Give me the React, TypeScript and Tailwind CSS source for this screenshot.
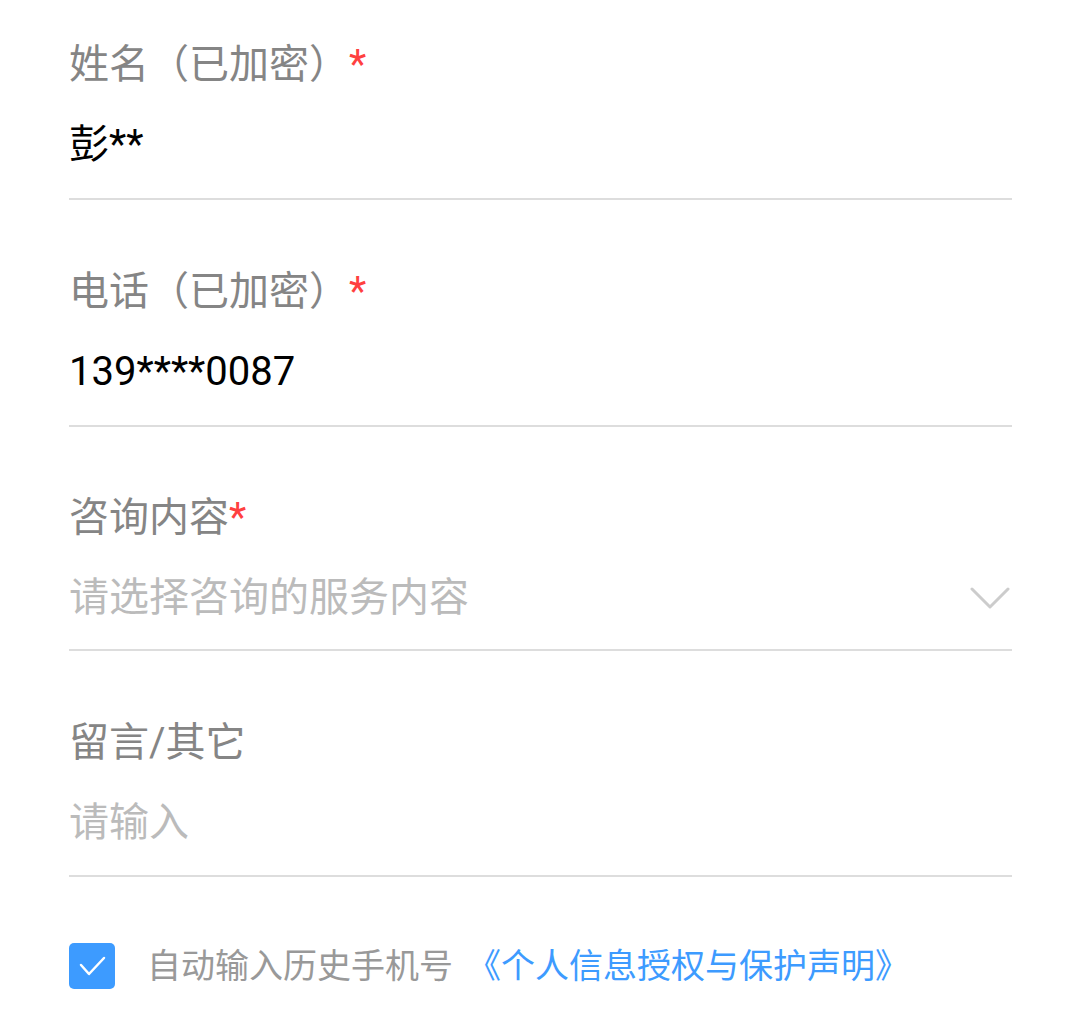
const FONT = "font-['Roboto','Noto_Sans_CJK_SC',sans-serif]";

function Field({
  label,
  required,
  value,
  placeholder,
  select,
  top,
  bottom,
}: {
  label: string;
  required?: boolean;
  value?: string;
  placeholder?: string;
  select?: boolean;
  top: string;
  bottom: string;
}) {
  return (
    <div className={`border-b-2 border-[#dddddd] ${top} ${bottom}`}>
      <div className="text-[40px] leading-[56px] text-[#858585]">
        {label}
        {required && <span className="text-[#ff4040]">*</span>}
      </div>
      <div className="mt-6 flex h-[56px] items-center justify-between text-[40px] leading-[56px]">
        {value ? (
          <span className="text-black">{value}</span>
        ) : (
          <span className="text-[#bbbbbb]">{placeholder}</span>
        )}
        {select && (
          <svg width="40" height="24" viewBox="0 0 40 24" className="mr-[2px]">
            <path
              d="M2 3 L20 21 L38 3"
              fill="none"
              stroke="#cccccc"
              strokeWidth="3"
              strokeLinecap="round"
              strokeLinejoin="round"
            />
          </svg>
        )}
      </div>
    </div>
  );
}

export default function App() {
  return (
    <div className={`min-h-screen w-full bg-white pl-[69px] pr-[68px] ${FONT}`}>
      <Field top="pt-[37px]" bottom="pb-[25px]" label="姓名（已加密）" required value="彭**" />
      <Field top="pt-[64px]" bottom="pb-[25px]" label="电话（已加密）" required value="139****0087" />
      <Field
        top="pt-[63px]"
        bottom="pb-[23px]"
        label="咨询内容"
        required
        placeholder="请选择咨询的服务内容"
        select
      />
      <Field top="pt-[64px]" bottom="pb-[24px]" label="留言/其它" placeholder="请输入" />

      {/* 授权勾选 */}
      <div className="mt-[66px] flex items-center">
        <div className="flex h-[46px] w-[46px] items-center justify-center rounded-[5px] bg-[#3d9bff]">
          <svg width="30" height="22" viewBox="0 0 30 22">
            <path
              d="M4 10 L12 19 L27 3"
              fill="none"
              stroke="#ffffff"
              strokeWidth="2.5"
              strokeLinecap="round"
              strokeLinejoin="round"
            />
          </svg>
        </div>
        <p className="ml-[32px] text-[34px] leading-[46px] text-[#999999]">
          自动输入历史手机号
          <span className="ml-[14px] text-[#3d9bff]">《个人信息授权与保护声明》</span>
        </p>
      </div>
    </div>
  );
}
